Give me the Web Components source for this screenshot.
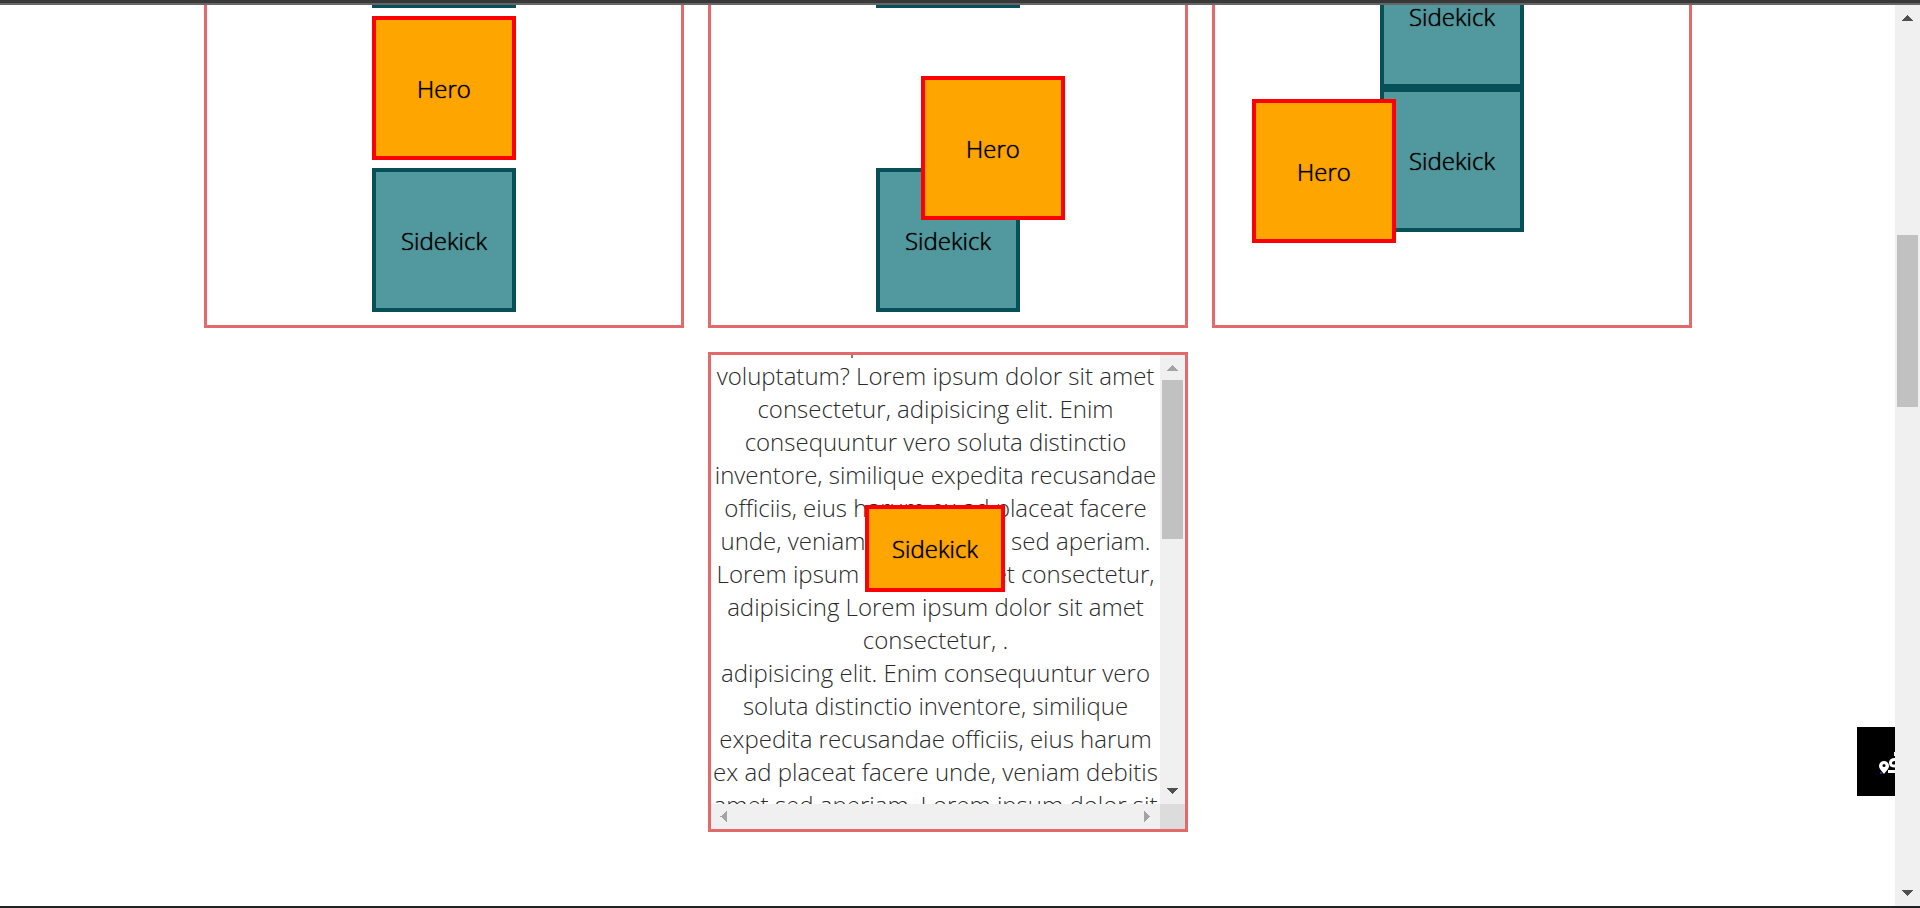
<!DOCTYPE html>
<html lang="en">
<head>
<meta charset="utf-8">
<title>CSS Positioning</title>
<style>
  html, body { margin: 0; height: 100%; }
  body { font: 300 24px/33px "Open Sans", sans-serif; color: #000; background: #fff; overflow: hidden; }
</style>
</head>
<body>
<page-window>
  <demo-grid>
    <demo-card>
      <char-box></char-box>
      <char-box kind="hero">Hero</char-box>
      <char-box>Sidekick</char-box>
    </demo-card>
    <demo-card>
      <char-box></char-box>
      <char-box kind="hero" place="relative">Hero</char-box>
      <char-box>Sidekick</char-box>
    </demo-card>
    <demo-card flush>
      <char-box>Sidekick</char-box>
      <char-box kind="hero" place="absolute">Hero</char-box>
      <char-box>Sidekick</char-box>
    </demo-card>
    <scroll-card>
      <p>id, dolorum placeat recusandae sit amet voluptatum? Lorem ipsum dolor sit amet consectetur, adipisicing elit. Enim consequuntur vero soluta distinctio inventore, similique expedita recusandae officiis, eius harum ex ad placeat facere unde, veniam debitis amet sed aperiam. Lorem ipsum dolor sit amet consectetur, adipisicing Lorem ipsum dolor sit amet consectetur, .</p>
      <p>adipisicing elit. Enim consequuntur vero soluta distinctio inventore, similique expedita recusandae officiis, eius harum ex ad placeat facere unde, veniam debitis amet sed aperiam. Lorem ipsum dolor sit</p>
      <char-box kind="hero" place="sticky" slot="pinned">Sidekick</char-box>
    </scroll-card>
  </demo-grid>
  <map-tab slot="floating"></map-tab>
</page-window>

<script>
const define = (name, html) => {
  const template = document.createElement('template');
  template.innerHTML = html;
  customElements.define(name, class extends HTMLElement {
    constructor() {
      super();
      this.attachShadow({ mode: 'open' }).append(template.content.cloneNode(true));
    }
  });
};

define('scroll-bar', `
  <style>
    :host { display: flex; flex-direction: column; width: 25px; box-sizing: border-box; background: #f0f0f0; --start: #505050; --end: #505050; }
    :host([kind="inner"]) { --start: #a3a3a3; }
    :host([kind="across"]) { flex-direction: row; width: auto; height: 25px; --start: #a3a3a3; --end: #a3a3a3; }
    svg { flex: none; width: 25px; height: 25px; display: block; }
    .track { flex: 1; min-height: 0; display: grid; padding: 0 2px; }
    .thumb { background: #c1c1c1; display: none; }
    :host([kind="page"]) .track { grid-template-rows: 205fr 172fr 474fr; }
    :host([kind="inner"]) .track { grid-template-rows: 0fr 159fr 240fr; }
    :host([kind="page"]) .thumb, :host([kind="inner"]) .thumb { display: block; grid-row: 2; }
    .start { fill: var(--start); } .end { fill: var(--end); }
    :host([kind="across"]) svg { transform: rotate(-90deg); }
  </style>
  <svg class="start" viewBox="0 0 25 25" shape-rendering="crispEdges"><path d="M12.5 9.5 18 16H7z"/></svg>
  <div class="track"><div class="thumb"></div></div>
  <svg class="end" viewBox="0 0 25 25" shape-rendering="crispEdges"><path d="M12.5 15.500 18 9H7z"/></svg>
`);

define('page-window', `
  <style>
    :host { display: grid; grid-template: minmax(0, 1fr) / minmax(0, 1fr) 25px; height: 100vh; box-sizing: border-box;
      border-top: 3px solid #383838; border-bottom: 2px solid #1f2222; }
    main, scroll-bar { border-top: 2px solid #666; }
    main { position: relative; overflow: hidden; display: flex; flex-direction: column; justify-content: flex-end; padding-bottom: 74px; }
    ::slotted(map-tab) { position: absolute; right: 0; bottom: 110px; }
  </style>
  <main><slot></slot><slot name="floating"></slot></main>
  <scroll-bar kind="page"></scroll-bar>
`);

define('demo-grid', `
  <style>
    :host { display: flex; flex-wrap: wrap; justify-content: center; gap: 24px; padding: 0 100px 0 101px; }
  </style>
  <slot></slot>
`);

define('demo-card', `
  <style>
    :host { position: relative; display: flex; flex-direction: column; align-items: center; justify-content: center; gap: 8px;
      width: 480px; height: 480px; box-sizing: border-box; border: 3px solid #e26a6a; }
    :host([flush]) { gap: 0; }
  </style>
  <slot></slot>
`);

define('char-box', `
  <style>
    :host { display: flex; align-items: center; justify-content: center; width: 144px; height: 144px; box-sizing: border-box;
      border: 4px solid #065058; background: #52989f; color: #000; text-shadow: 0 0 1px #000; }
    :host([kind="hero"]) { border-color: red; background: orange; }
    :host([place="relative"]) { position: relative; left: 45px; top: 60px; }
    :host([place="absolute"]) { position: absolute; left: 37px; bottom: 82px; }
    :host([place="sticky"]) { width: 140px; height: 87px; }
  </style>
  <slot></slot>
`);

define('scroll-card', `
  <style>
    :host { display: grid; grid-template: minmax(0, 1fr) 25px / minmax(0, 1fr) 25px; width: 480px; height: 480px;
      box-sizing: border-box; border: 3px solid #e26a6a; }
    .view { position: relative; overflow: hidden; display: flex; flex-direction: column; text-align: center; color: #2b2b2b; }
    .text { height: 0; flex: 1; }
    ::slotted(p) { margin: 0; }
    .lift { margin-top: -29px; }
    ::slotted(char-box) { position: absolute; top: 150px; left: 154px; }
    .corner { background: #dcdcdc; }
  </style>
  <div class="view"><div class="text"><div class="lift"><slot></slot></div></div><slot name="pinned"></slot></div>
  <scroll-bar kind="inner"></scroll-bar>
  <scroll-bar kind="across"></scroll-bar>
  <div class="corner"></div>
`);

define('map-tab', `
  <style>
    :host { display: block; width: 38px; height: 69px; background: #000; overflow: hidden; }
    svg { display: block; width: 38px; height: 69px; }
  </style>
  <svg viewBox="0 0 38 69" aria-hidden="true">
    <rect x="23" y="45" width="2" height="2" fill="#4a1a9c"/>
    <path d="M27 34a5 5 0 0 1 5 5c0 3-3 5-5 8-2-3-5-5-5-8a5 5 0 0 1 5-5z" fill="#fff"/>
    <circle cx="27" cy="38.500" r="1.500" fill="#000"/>
    <path d="M38 32.500c-3 0-4.500 1-4.500 3.500s1.500 3 4.500 3M38 44.500h-7" fill="none" stroke="#fff" stroke-width="3"/>
    <rect x="37" y="25" width="1" height="4" fill="#fff"/>
  </svg>
`);
</script>
</body>
</html>
